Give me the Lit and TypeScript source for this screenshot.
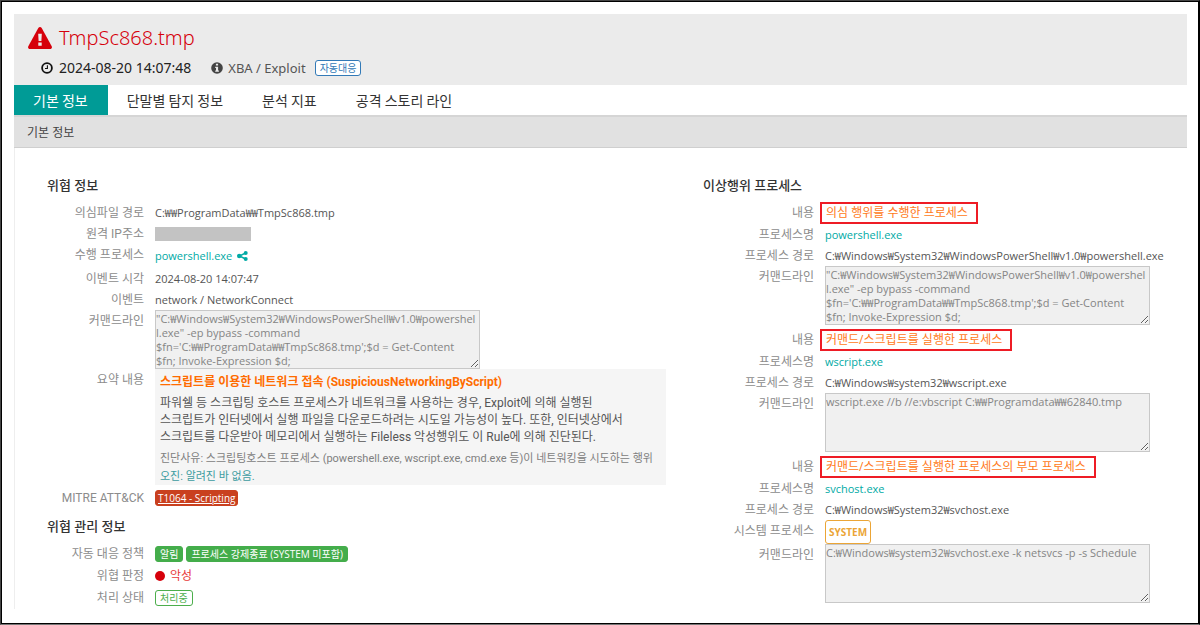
import { LitElement, html, css, svg } from "lit";
import { customElement, property, state } from "lit/decorators.js";

const POWERSHELL_CMD = [
  `"C:₩Windows₩System32₩WindowsPowerShell₩v1.0₩powershel`,
  `l.exe" -ep bypass -command`,
  `$fn='C:₩₩ProgramData₩₩TmpSc868.tmp';$d = Get-Content`,
  `$fn; Invoke-Expression $d;`,
].join("\n");

interface ProcessInfo {
  id: string;
  note: string;
  name: string;
  path: string;
  system: boolean;
  command: string;
}

const PROCESSES: ProcessInfo[] = [
  {
    id: "actor",
    note: "의심 행위를 수행한 프로세스",
    name: "powershell.exe",
    path: "C:₩Windows₩System32₩WindowsPowerShell₩v1.0₩powershell.exe",
    system: false,
    command: POWERSHELL_CMD,
  },
  {
    id: "runner",
    note: "커맨드/스크립트를 실행한 프로세스",
    name: "wscript.exe",
    path: "C:₩Windows₩system32₩wscript.exe",
    system: false,
    command: "wscript.exe //b //e:vbscript C:₩₩Programdata₩₩62840.tmp",
  },
  {
    id: "parent",
    note: "커맨드/스크립트를 실행한 프로세스의 부모 프로세스",
    name: "svchost.exe",
    path: "C:₩Windows₩System32₩svchost.exe",
    system: true,
    command: "C:₩Windows₩system32₩svchost.exe -k netsvcs -p -s Schedule",
  },
];

const TABS = ["기본 정보", "단말별 탐지 정보", "분석 지표", "공격 스토리 라인"];

const warningIcon = svg`<svg class="warning" viewBox="0 0 24 22" aria-hidden="true">
  <path fill="#d6000b" d="M12 0c.7 0 1.300.400 1.700 1l10 18.300c.700 1.300-.2 2.700-1.700 2.700H2c-1.500 0-2.400-1.400-1.700-2.700L10.300 1c.4-.6 1-1 1.700-1z"/>
  <path fill="#ebebeb" d="M10.200 6.800h3.600l-.4 7.200h-2.800zM10.300 15.600h3.400v3.100h-3.400z"/>
</svg>`;

const clockIcon = svg`<svg class="clock" viewBox="0 0 12 12" aria-hidden="true">
  <circle cx="6" cy="6" r="4.900" fill="none" stroke="#111" stroke-width="1.800"/>
  <path d="M6.400 3.200v3.300H4" fill="none" stroke="#111" stroke-width="1.100"/>
</svg>`;

const infoIcon = svg`<svg class="info" viewBox="0 0 12 12" aria-hidden="true">
  <circle cx="6" cy="6" r="5.800" fill="#444"/>
  <path fill="#ebebeb" d="M4.900 1.800h2.200v1.700H4.900zM4.200 4.700h2.900v3.800h.8v1.300H4.200V8.500h.8V6h-.8z"/>
</svg>`;

const shareIcon = svg`<svg class="share" viewBox="0 0 11 10" aria-hidden="true">
  <path d="M8.700 2 2.400 5l6.300 3" fill="none" stroke="#00aaa5" stroke-width="1.400"/>
  <circle cx="8.700" cy="2" r="2" fill="#00aaa5"/>
  <circle cx="2.200" cy="5" r="2.200" fill="#00aaa5"/>
  <circle cx="8.700" cy="8" r="2" fill="#00aaa5"/>
</svg>`;

@customElement("info-row")
export class InfoRow extends LitElement {
  @property() label = "";

  static styles = css`
    :host {
      display: grid;
      grid-template-columns: var(--label-width) minmax(0, 1fr);
      column-gap: 11px;
      min-height: var(--row-height);
    }
    .label {
      padding-top: 1px;
      text-align: right;
      color: #8c8c8c;
      font: 12px/20px Roboto, "Noto Sans CJK KR", sans-serif;
      white-space: nowrap;
    }
    .value {
      display: flex;
      align-items: center;
      min-width: 0;
    }
  `;

  render() {
    return html`<div class="label">${this.label}</div>
      <div class="value"><slot></slot></div>`;
  }
}

@customElement("app-root")
export class AppRoot extends LitElement {
  @state() private tab = 0;

  static styles = css`
    :host {
      display: block;
      box-sizing: border-box;
      min-height: 100vh;
      border: 1px solid;
      border-color: #444 #000 #777 #444;
      box-shadow: inset 0 0 0 1px #000;
      padding: 13px 12px 8px 13px;
      background: #fff;
      color: #555;
      font: 11px/18px "Open Sans", "Noto Sans CJK KR", sans-serif;
    }
    * {
      box-sizing: border-box;
    }
    a {
      color: #00aaa5;
      text-decoration: none;
    }
    h1,
    h2,
    h3,
    p {
      margin: 0;
    }
    header {
      height: 71px;
      padding: 10px 14px 0;
      background: #ebebeb;
    }
    h1 {
      display: flex;
      align-items: center;
      gap: 7px;
      font: 300 20px/28px "Noto Sans", sans-serif;
      color: #d6000b;
    }
    .warning {
      width: 24px;
      height: 22px;
    }
    .meta {
      display: flex;
      align-items: center;
      margin-top: 6px;
      padding-left: 13px;
      line-height: 20px;
      font-family: "Noto Sans", "Noto Sans CJK KR", sans-serif;
    }
    .clock,
    .info {
      width: 12px;
      height: 12px;
    }
    time.detected {
      margin: 0 20px 0 6px;
      font-size: 14px;
      color: #222;
    }
    .kind {
      margin: 0 9px 0 5px;
      font-size: 13px;
      color: #555;
    }
    .tag {
      display: inline-block;
      padding: 0 4px;
      border: 1px solid;
      border-radius: 3px;
      font-size: 10px;
      line-height: 14px;
      white-space: nowrap;
    }
    .tag.blue {
      color: #337ab7;
      background: #fff;
    }
    .tag.green {
      color: #4cae4c;
    }
    .tag.solid {
      color: #fff;
      background: #44ad4b;
      border-color: #44ad4b;
      margin-right: 3px;
    }
    .tag.attack {
      color: #fff;
      background: #c9401f;
      border-color: #c9401f;
      padding: 0 2px;
      text-decoration: underline;
    }
    .tag.system {
      color: #eba536;
      background: #fff;
      padding: 4px 3px;
      font-weight: 700;
    }
    nav {
      display: flex;
      height: 30px;
    }
    nav button {
      padding: 0 20px 0 19px;
      border: 0;
      background: none;
      color: #333;
      font: 14px/30px "Noto Sans CJK KR", sans-serif;
      white-space: nowrap;
      cursor: pointer;
    }
    nav button.active {
      background: #009b96;
      color: #fff;
    }
    .bar {
      padding: 2px 13px 0;
      border-top: 2px solid #d5d5d5;
      border-bottom: 1px solid #cfcfcf;
      background: #e1e1e1;
      font-size: 12px;
      font-weight: 400;
      line-height: 28px;
      color: #444;
    }
    .content {
      display: grid;
      grid-template-columns: minmax(0, 1fr) 484px;
      padding: 27px 0 0 32px;
      border-left: 1px solid #eee;
    }
    .threat {
      --label-width: 97px;
      --row-height: 21px;
    }
    .process {
      --label-width: 111px;
      --row-height: 21px;
    }
    h3 {
      font-size: 13px;
      line-height: 20px;
      font-weight: 500;
      color: #333;
      margin-bottom: 7px;
    }
    .manage {
      --row-height: 22px;
      margin-top: 8px;
    }
    .tall {
      --row-height: 24px;
    }
    .masked {
      width: 96px;
      height: 14px;
      background: #c3c3c3;
    }
    .share {
      width: 11px;
      height: 10px;
      margin-left: 5px;
    }
    textarea {
      display: block;
      width: 325px;
      height: 59px;
      padding: 1px 0 0;
      border: 1px solid #c8c8c8;
      background: #f0f0f0;
      color: #858585;
      font: 11px/14px "Open Sans", "Noto Sans CJK KR", sans-serif;
      white-space: pre;
      overflow: hidden;
    }
    .summary {
      width: 511px;
      padding: 5px 5px 0;
      background: #f5f5f5;
      font: 12px/17px Roboto, "Noto Sans CJK KR", sans-serif;
      color: #555;
    }
    .summary .title {
      font-weight: 700;
      color: #ff6c00;
      margin-bottom: 4px;
    }
    .summary .reason {
      font-size: 11px;
      color: #808080;
      margin-top: 4px;
    }
    .summary .safe {
      font-size: 11px;
      color: #3d9ca0;
      margin-top: 1px;
    }
    .mitre {
      margin-top: 2px;
    }
    .command {
      margin-bottom: 4px;
    }
    .dot {
      width: 10px;
      height: 10px;
      border-radius: 50%;
      background: #d6000b;
      margin-right: 5px;
    }
    .bad {
      color: #e83a3a;
      font-size: 12px;
    }
    .note {
      margin-left: -5px;
      padding: 0 8px 0 4px;
      border: 2px solid #ee1c25;
      color: #ff7920;
      font-size: 12px;
      line-height: 18px;
    }
  `;

  private renderProcess(p: ProcessInfo) {
    return html`
      <info-row label="내용"><span class="note">${p.note}</span></info-row>
      <info-row label="프로세스명"><a href="#${p.id}">${p.name}</a></info-row>
      <info-row label="프로세스 경로">${p.path}</info-row>
      ${p.system
        ? html`<info-row label="시스템 프로세스"><span class="tag system">SYSTEM</span></info-row>`
        : ""}
      <info-row class="command" label="커맨드라인">
        <textarea aria-label="커맨드라인" readonly .value=${p.command}></textarea>
      </info-row>
    `;
  }

  render() {
    return html`
      <header>
        <h1>${warningIcon}<span>TmpSc868.tmp</span></h1>
        <div class="meta">
          ${clockIcon}<time class="detected">2024-08-20 14:07:48</time>
          ${infoIcon}<span class="kind">XBA / Exploit</span>
          <span class="tag blue">자동대응</span>
        </div>
      </header>
      <nav>
        ${TABS.map(
          (t, i) => html`<button class=${i === this.tab ? "active" : ""} @click=${() => (this.tab = i)}>${t}</button>`
        )}
      </nav>
      <h2 class="bar">기본 정보</h2>
      <main class="content">
        <div class="threat">
          <section>
            <h3>위협 정보</h3>
            <info-row label="의심파일 경로">C:₩₩ProgramData₩₩TmpSc868.tmp</info-row>
            <info-row label="원격 IP주소"><span class="masked"></span></info-row>
            <info-row class="tall" label="수행 프로세스"><a href="#actor">powershell.exe</a>${shareIcon}</info-row>
            <info-row label="이벤트 시각">2024-08-20 14:07:47</info-row>
            <info-row label="이벤트">network / NetworkConnect</info-row>
            <info-row label="커맨드라인">
              <textarea aria-label="커맨드라인" readonly .value=${POWERSHELL_CMD}></textarea>
            </info-row>
            <info-row label="요약 내용">
              <div class="summary">
                <p class="title">스크립트를 이용한 네트워크 접속 (SuspiciousNetworkingByScript)</p>
                <p>파워쉘 등 스크립팅 호스트 프로세스가 네트워크를 사용하는 경우, Exploit에 의해 실행된</p>
                <p>스크립트가 인터넷에서 실행 파일을 다운로드하려는 시도일 가능성이 높다. 또한, 인터넷상에서</p>
                <p>스크립트를 다운받아 메모리에서 실행하는 Fileless 악성행위도 이 Rule에 의해 진단된다.</p>
                <p class="reason">진단사유: 스크립팅호스트 프로세스 (powershell.exe, wscript.exe, cmd.exe 등)이 네트워킹을 시도하는 행위</p>
                <p class="safe">오진: 알려진 바 없음.</p>
              </div>
            </info-row>
            <info-row class="mitre" label="MITRE ATT&CK"><a class="tag attack" href="#t1064">T1064 - Scripting</a></info-row>
          </section>
          <section class="manage">
            <h3>위협 관리 정보</h3>
            <info-row label="자동 대응 정책">
              <span class="tag solid">알림</span><span class="tag solid">프로세스 강제종료 (SYSTEM 미포함)</span>
            </info-row>
            <info-row label="위협 판정"><span class="dot"></span><span class="bad">악성</span></info-row>
            <info-row label="처리 상태"><span class="tag green">처리중</span></info-row>
          </section>
        </div>
        <section class="process">
          <h3>이상행위 프로세스</h3>
          ${PROCESSES.map((p) => this.renderProcess(p))}
        </section>
      </main>
    `;
  }
}
